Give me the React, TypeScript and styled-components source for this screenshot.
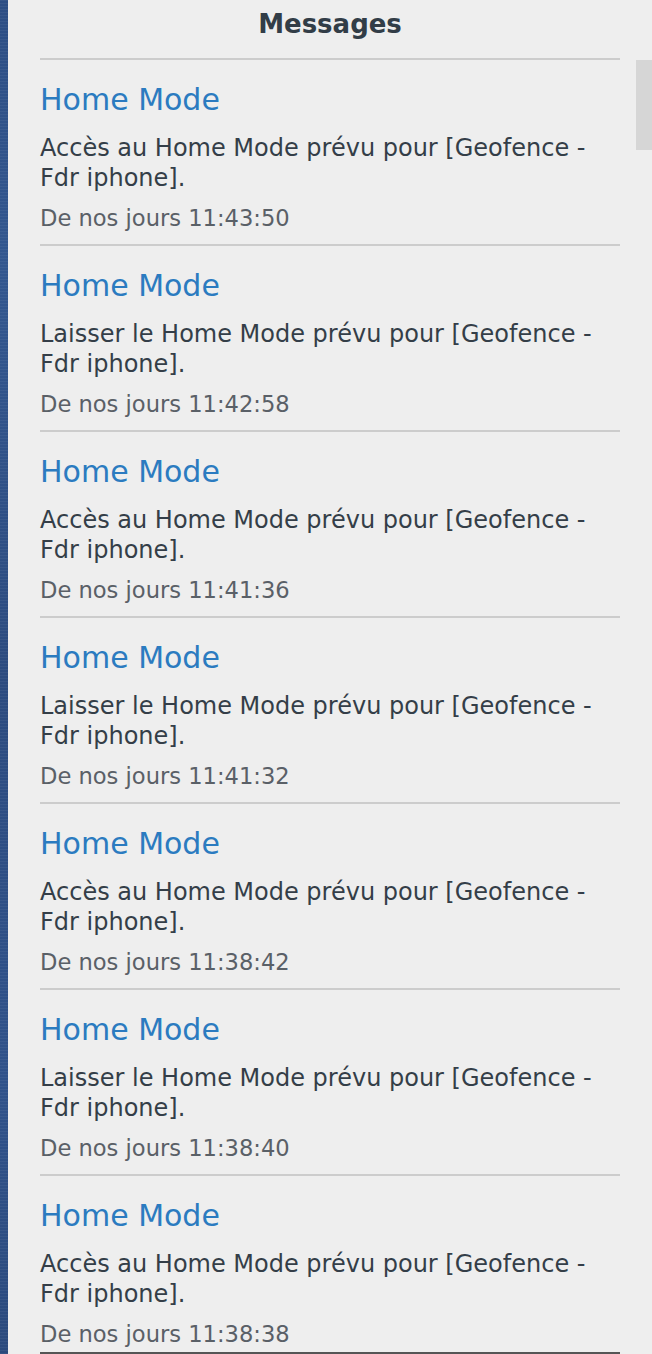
import styled, { createGlobalStyle } from "styled-components";

type Message = {
    title: string;
    text: string;
    time: string;
};

const messages: Message[] = [
    { title: "Home Mode", text: "Accès au Home Mode prévu pour [Geofence - Fdr iphone].", time: "De nos jours 11:43:50" },
    { title: "Home Mode", text: "Laisser le Home Mode prévu pour [Geofence - Fdr iphone].", time: "De nos jours 11:42:58" },
    { title: "Home Mode", text: "Accès au Home Mode prévu pour [Geofence - Fdr iphone].", time: "De nos jours 11:41:36" },
    { title: "Home Mode", text: "Laisser le Home Mode prévu pour [Geofence - Fdr iphone].", time: "De nos jours 11:41:32" },
    { title: "Home Mode", text: "Accès au Home Mode prévu pour [Geofence - Fdr iphone].", time: "De nos jours 11:38:42" },
    { title: "Home Mode", text: "Laisser le Home Mode prévu pour [Geofence - Fdr iphone].", time: "De nos jours 11:38:40" },
    { title: "Home Mode", text: "Accès au Home Mode prévu pour [Geofence - Fdr iphone].", time: "De nos jours 11:38:38" },
];

const App = () => {
    return (
        <>
            <GlobalStyle />
            <Page>
                <Edge />
                <Panel>
                    <Content>
                        <Header>Messages</Header>
                        <List>
                            {messages.map((m, i) => (
                                <Item key={i} $last={i === messages.length - 1}>
                                    <Title>{m.title}</Title>
                                    <Text>{m.text}</Text>
                                    <Time>{m.time}</Time>
                                </Item>
                            ))}
                        </List>
                    </Content>
                    <Track>
                        <Thumb />
                    </Track>
                </Panel>
            </Page>
        </>
    );
};

const GlobalStyle = createGlobalStyle`
    html, body {
        margin: 0;
        padding: 0;
        background: #eeeeee;
        overflow: hidden;
    }
    body {
        font-family: "DejaVu Sans", Verdana, sans-serif;
    }
`;

const Page = styled.div`
    display: flex;
    height: 1354px;
    overflow: hidden;
`;

const Edge = styled.div`
    width: 8px;
    flex-shrink: 0;
    background:
        repeating-linear-gradient(0deg, rgba(255, 255, 255, 0.05) 0 1px, transparent 1px 3px),
        linear-gradient(180deg, #2d4e84 0%, #33578f 20%, #2c4b7f 50%, #30528a 80%, #2b4a7d 100%);
`;

const Panel = styled.div`
    flex: 1;
    display: flex;
    background: #eeeeee;
`;

const Content = styled.div`
    flex: 1;
    padding: 0 16px 0 32px;
`;

const Header = styled.h2`
    margin: 0;
    padding: 8px 0 18px;
    text-align: center;
    font-size: 26px;
    line-height: 32px;
    font-weight: bold;
    color: #323d47;
`;

const List = styled.div`
    display: flex;
    flex-direction: column;
`;

const Item = styled.div<{ $last?: boolean }>`
    display: flex;
    flex-direction: column;
    border-top: 2px solid #cccccc;
    padding: 22px 0 ${(p) => (p.$last ? "4px" : "12px")};
    ${(p) => p.$last && "border-bottom: 2px solid #555555;"}
`;

const Title = styled.div`
    font-size: 30px;
    line-height: 36px;
    color: #2b7bc0;
    margin-bottom: 15px;
`;

const Text = styled.div`
    font-size: 24px;
    line-height: 30px;
    color: #343e48;
    margin-bottom: 11px;
`;

const Time = styled.div`
    font-size: 22.6px;
    line-height: 28px;
    color: #5a6067;
`;

const Track = styled.div`
    width: 16px;
    flex-shrink: 0;
    padding-top: 60px;
`;

const Thumb = styled.div`
    height: 90px;
    background: #d6d6d6;
`;

export default App;
